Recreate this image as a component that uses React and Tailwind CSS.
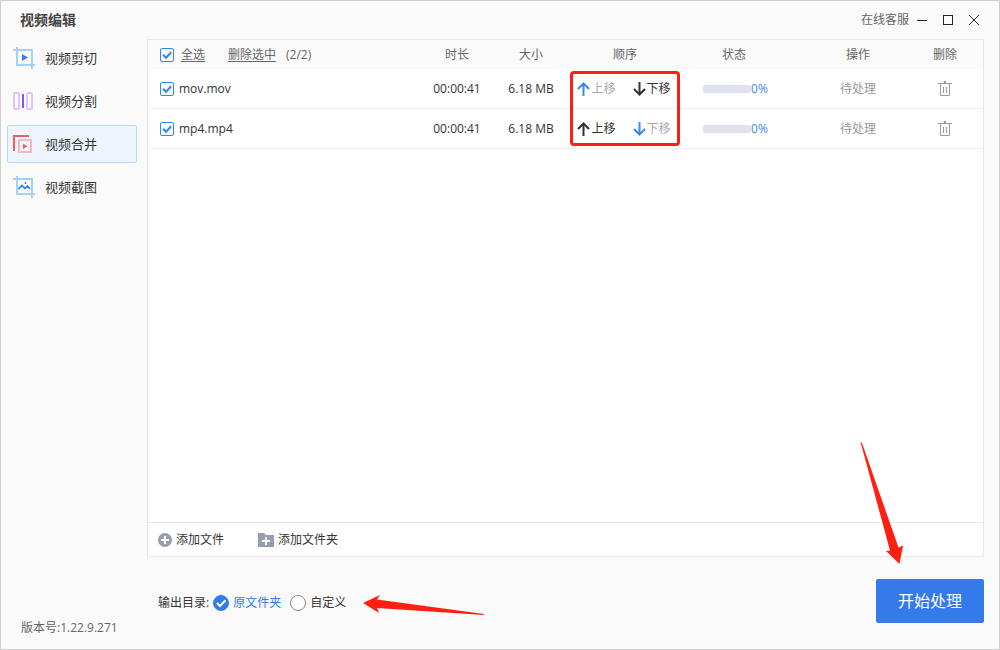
import React, { useState } from 'react';

const menuItems = ['视频剪切', '视频分割', '视频合并', '视频截图'];

const initialFiles = [
  { id: 1, name: 'mov.mov', duration: '00:00:41', size: '6.18 MB', progress: 0, status: '待处理' },
  { id: 2, name: 'mp4.mp4', duration: '00:00:41', size: '6.18 MB', progress: 0, status: '待处理' },
];

const CropFrame = ({ children }) => (
  <svg className="h-6 w-6" viewBox="0 0 24 24" fill="none">
    <path d="M0 4H19V17M4 1V19H22M19 17V23" stroke="#a6cffa" strokeWidth="2" />
    {children}
  </svg>
);

const MenuIcon = ({ name }) => {
  if (name === '视频剪切') {
    return (
      <CropFrame>
        <path d="M9 8L15 11.5L9 15Z" fill="#2f7ff0" />
      </CropFrame>
    );
  }
  if (name === '视频分割') {
    return (
      <svg className="h-6 w-6" viewBox="0 0 24 24" fill="none">
        <rect x="1" y="4" width="5" height="16" rx="1" stroke="#dcc6fa" strokeWidth="2" />
        <rect x="14" y="4" width="5" height="16" rx="1" stroke="#dcc6fa" strokeWidth="2" />
        <path d="M10 5V19" stroke="#8a55e8" strokeWidth="2" />
      </svg>
    );
  }
  if (name === '视频合并') {
    return (
      <svg className="h-6 w-6" viewBox="0 0 24 24" fill="none">
        <path d="M1 19V4H16" stroke="#f0605c" strokeWidth="2" />
        <rect x="6" y="8" width="12" height="12" stroke="#f8b8b8" strokeWidth="2" />
        <path d="M10 11.5L14.5 14.2L10 17Z" fill="#f0605c" />
      </svg>
    );
  }
  return (
    <CropFrame>
      <path d="M5.5 14L9 10.5L12 13.5L14.5 11L17 14" stroke="#2f7ff0" strokeWidth="1.6" />
      <circle cx="12.5" cy="8" r="1" fill="#2f7ff0" />
    </CropFrame>
  );
};

const MoveArrow = ({ down, color }) => (
  <svg className={`h-[14px] w-[13px] ${down ? 'rotate-180' : ''}`} viewBox="0 0 13 14" fill="none">
    <path d="M6.5 14V1.5M1 7L6.5 1.5L12 7" stroke={color} strokeWidth="2" />
  </svg>
);

const TrashIcon = () => (
  <svg className="h-4 w-[14px]" viewBox="0 0 14 16" fill="none" stroke="#999999">
    <path d="M0 2.5H14M2.5 2.5V14.5H11.5V2.5M5.5 6V12M8.5 6V12" />
    <path d="M6 1H8" strokeWidth="2" />
  </svg>
);

const CheckBox = ({ label, ...props }) => (
  <span className="grid h-[14px] w-[14px] shrink-0">
    <input
      type="checkbox"
      aria-label={label}
      className="peer col-start-1 row-start-1 h-[14px] w-[14px] appearance-none rounded-xs border border-[#2f86f6] bg-white"
      {...props}
    />
    <svg
      className="pointer-events-none invisible col-start-1 row-start-1 h-[14px] w-[14px] peer-checked:visible"
      viewBox="0 0 14 14"
      fill="none"
    >
      <path d="M3 6.8L6 9.8L11.2 4.2" stroke="#2f86f6" strokeWidth="2" />
    </svg>
  </span>
);

const OutputRadio = ({ label, ...props }) => (
  <label className="flex items-center gap-1">
    <span className="grid h-4 w-4">
      <input
        type="radio"
        name="output"
        className="peer col-start-1 row-start-1 h-4 w-4 appearance-none rounded-full border border-[#888888] bg-white checked:border-[#357aea] checked:bg-[#357aea]"
        {...props}
      />
      <svg
        className="pointer-events-none invisible col-start-1 row-start-1 h-4 w-4 peer-checked:visible"
        viewBox="0 0 16 16"
        fill="none"
      >
        <path d="M4 8L7 11L12.5 5.2" stroke="white" strokeWidth="2" />
      </svg>
    </span>
    <span className={props.checked ? 'text-[#357aea]' : ''}>{label}</span>
  </label>
);

const App = () => {
  const [active, setActive] = useState('视频合并');
  const [files, setFiles] = useState(initialFiles);
  const [selected, setSelected] = useState([1, 2]);
  const [output, setOutput] = useState('原文件夹');

  const toggle = (id) => {
    setSelected(selected.includes(id) ? selected.filter((item) => item !== id) : [...selected, id]);
  };

  const remove = (ids) => {
    setFiles(files.filter((file) => !ids.includes(file.id)));
    setSelected(selected.filter((id) => !ids.includes(id)));
  };

  const move = (index, step) => {
    const next = [...files];
    const [file] = next.splice(index, 1);
    next.splice(index + step, 0, file);
    setFiles(next);
  };

  return (
    <div className="flex min-h-screen flex-col border border-[#d0d0d0] bg-[#fafafa] font-['Open_Sans','Noto_Sans_CJK_SC',sans-serif] text-[12px] leading-4 text-[#333333]">
      {/* 标题栏 */}
      <header className="flex h-[38px] items-center justify-between pr-5 pl-[19px]">
        <h1 className="text-[14px] font-semibold text-[#444444]">视频编辑</h1>
        <div className="flex items-center gap-4">
          <div className="flex items-center gap-2">
            <a href="#service" className="text-[#666666]">在线客服</a>
            <button aria-label="最小化">
              <svg className="h-[10px] w-[10px]" viewBox="0 0 10 10" stroke="#222222">
                <path d="M0 5.5H10" />
              </svg>
            </button>
          </div>
          <button aria-label="最大化">
            <svg className="h-[10px] w-[10px]" viewBox="0 0 10 10" fill="none" stroke="#222222">
              <rect x="0.5" y="0.5" width="9" height="9" />
            </svg>
          </button>
          <button aria-label="关闭">
            <svg className="h-[10px] w-[10px]" viewBox="0 0 10 10" stroke="#222222">
              <path d="M0 0L10 10M10 0L0 10" />
            </svg>
          </button>
        </div>
      </header>

      <div className="flex flex-1">
        {/* 左侧菜单 */}
        <aside className="flex w-[146px] shrink-0 flex-col justify-between pr-[10px] pb-[13px] pl-[6px]">
          <nav className="flex flex-col gap-[5px]">
            {menuItems.map((item) => (
              <button
                key={item}
                onClick={() => setActive(item)}
                className={`flex h-[38px] items-center gap-2 rounded-xs border pl-[5px] text-[13px] ${
                  active === item ? 'border-[#b9d6fb] bg-[#eef5ff]' : 'border-transparent'
                }`}
              >
                <MenuIcon name={item} />
                {item}
              </button>
            ))}
          </nav>
          <p className="pl-[14px] text-[#666666]">版本号:1.22.9.271</p>
        </aside>

        <main className="mr-[15px] flex flex-1 flex-col">
          <section className="flex flex-1 flex-col border border-[#e8e8e8] bg-white">
            {/* 文件列表 */}
            <div className="flex-1">
              <table className="w-full table-fixed border-separate border-spacing-0 text-center">
                <colgroup>
                  <col />
                  <col className="w-[74px]" />
                  <col className="w-[74px]" />
                  <col className="w-[114px]" />
                  <col className="w-[127px]" />
                  <col className="w-[98px]" />
                  <col className="w-[76px]" />
                </colgroup>
                <thead className="bg-[#fafafa] text-[#666666]">
                  <tr className="h-[29px]">
                    <th className="pl-3 font-normal">
                      <div className="flex items-center">
                        <label className="flex items-center gap-[7px] underline underline-offset-2">
                          <CheckBox
                            label="全选"
                            checked={files.length > 0 && selected.length === files.length}
                            onChange={(e) => setSelected(e.target.checked ? files.map((file) => file.id) : [])}
                          />
                          全选
                        </label>
                        <button onClick={() => remove(selected)} className="ml-[23px] underline underline-offset-2">
                          删除选中
                        </button>
                        <span className="ml-[10px]">({selected.length}/{files.length})</span>
                      </div>
                    </th>
                    <th className="font-normal">时长</th>
                    <th className="font-normal">大小</th>
                    <th className="font-normal">顺序</th>
                    <th className="pr-[23px] font-normal">状态</th>
                    <th className="font-normal">操作</th>
                    <th className="font-normal">删除</th>
                  </tr>
                </thead>
                <tbody>
                  {files.map((file, index) => {
                    const first = index === 0;
                    const last = index === files.length - 1;
                    return (
                      <tr key={file.id} className="h-10 *:border-b *:border-[#f0f0f0]">
                        <td className="pl-3">
                          <label className="flex items-center gap-[5px]">
                            <CheckBox
                              label={file.name}
                              checked={selected.includes(file.id)}
                              onChange={() => toggle(file.id)}
                            />
                            {file.name}
                          </label>
                        </td>
                        <td>{file.duration}</td>
                        <td>{file.size}</td>
                        <td className="relative pr-[2px]">
                          <div className="flex items-center justify-center gap-[17px]">
                            <button
                              disabled={first}
                              onClick={() => move(index, -1)}
                              className="flex items-center gap-px disabled:text-[#aaaaaa]"
                            >
                              <MoveArrow color={first ? '#3a87ee' : '#333333'} />
                              上移
                            </button>
                            <button
                              disabled={last}
                              onClick={() => move(index, 1)}
                              className="flex items-center gap-px disabled:text-[#aaaaaa]"
                            >
                              <MoveArrow down color={last ? '#3a87ee' : '#333333'} />
                              下移
                            </button>
                          </div>
                          {first && (
                            <div className="pointer-events-none absolute top-[2px] left-[2px] h-[75px] w-[110px] rounded-sm border-3 border-[#fb1f14]" />
                          )}
                        </td>
                        <td className="pl-[21px]">
                          <div className="flex items-center text-[#4a86ea]">
                            <div className="h-2 w-12 overflow-hidden rounded-xs bg-[#dfe0f0]">
                              <div className="h-full bg-[#357aea]" style={{ width: `${file.progress}%` }} />
                            </div>
                            {file.progress}%
                          </div>
                        </td>
                        <td className="text-[#999999]">{file.status}</td>
                        <td>
                          <button aria-label="删除" onClick={() => remove([file.id])} className="align-middle">
                            <TrashIcon />
                          </button>
                        </td>
                      </tr>
                    );
                  })}
                </tbody>
              </table>
            </div>

            {/* 添加文件 */}
            <div className="flex h-[34px] items-center gap-[34px] border-t border-[#e8e8e8] pl-[10px]">
              <button className="flex items-center gap-1">
                <svg className="h-[14px] w-[14px]" viewBox="0 0 14 14">
                  <circle cx="7" cy="7" r="7" fill="#969db0" />
                  <path d="M7 3V11M3 7H11" stroke="white" strokeWidth="2" />
                </svg>
                添加文件
              </button>
              <button className="flex items-center gap-1">
                <svg className="h-[14px] w-4" viewBox="0 0 16 14">
                  <path d="M0 0H6L8 2H16V14H0Z" fill="#969db0" />
                  <path d="M8 4V12M4 8H12" stroke="white" strokeWidth="2" />
                </svg>
                添加文件夹
              </button>
            </div>
          </section>

          {/* 输出目录 */}
          <footer className="flex items-center justify-between pt-[22px] pb-[26px] pl-[11px]">
            <div className="flex items-center gap-[9px] pt-[3px]">
              <div className="flex items-center gap-1">
                <span>输出目录:</span>
                <OutputRadio label="原文件夹" checked={output === '原文件夹'} onChange={() => setOutput('原文件夹')} />
              </div>
              <div className="relative">
                <OutputRadio label="自定义" checked={output === '自定义'} onChange={() => setOutput('自定义')} />
                <svg
                  className="pointer-events-none absolute top-0 left-full ml-[17px] h-5 w-[121px]"
                  viewBox="0 0 121 20"
                >
                  <path d="M0 8L17 0L14 4.5L121 19L120.5 20L14 13L16 18Z" fill="#ff2012" />
                </svg>
              </div>
            </div>
            <div className="relative">
              <button className="h-11 w-[108px] rounded-xs bg-[#357aea] text-[16px] text-white">开始处理</button>
              <svg
                className="pointer-events-none absolute right-[81px] bottom-[59px] h-[122px] w-[43px]"
                viewBox="0 0 43 122"
              >
                <path d="M0.5 0L2 1L38.5 105.5L43 103.5L39.5 122L26 109L30 108.5Z" fill="#ff2012" />
              </svg>
            </div>
          </footer>
        </main>
      </div>
    </div>
  );
};

export default App;
